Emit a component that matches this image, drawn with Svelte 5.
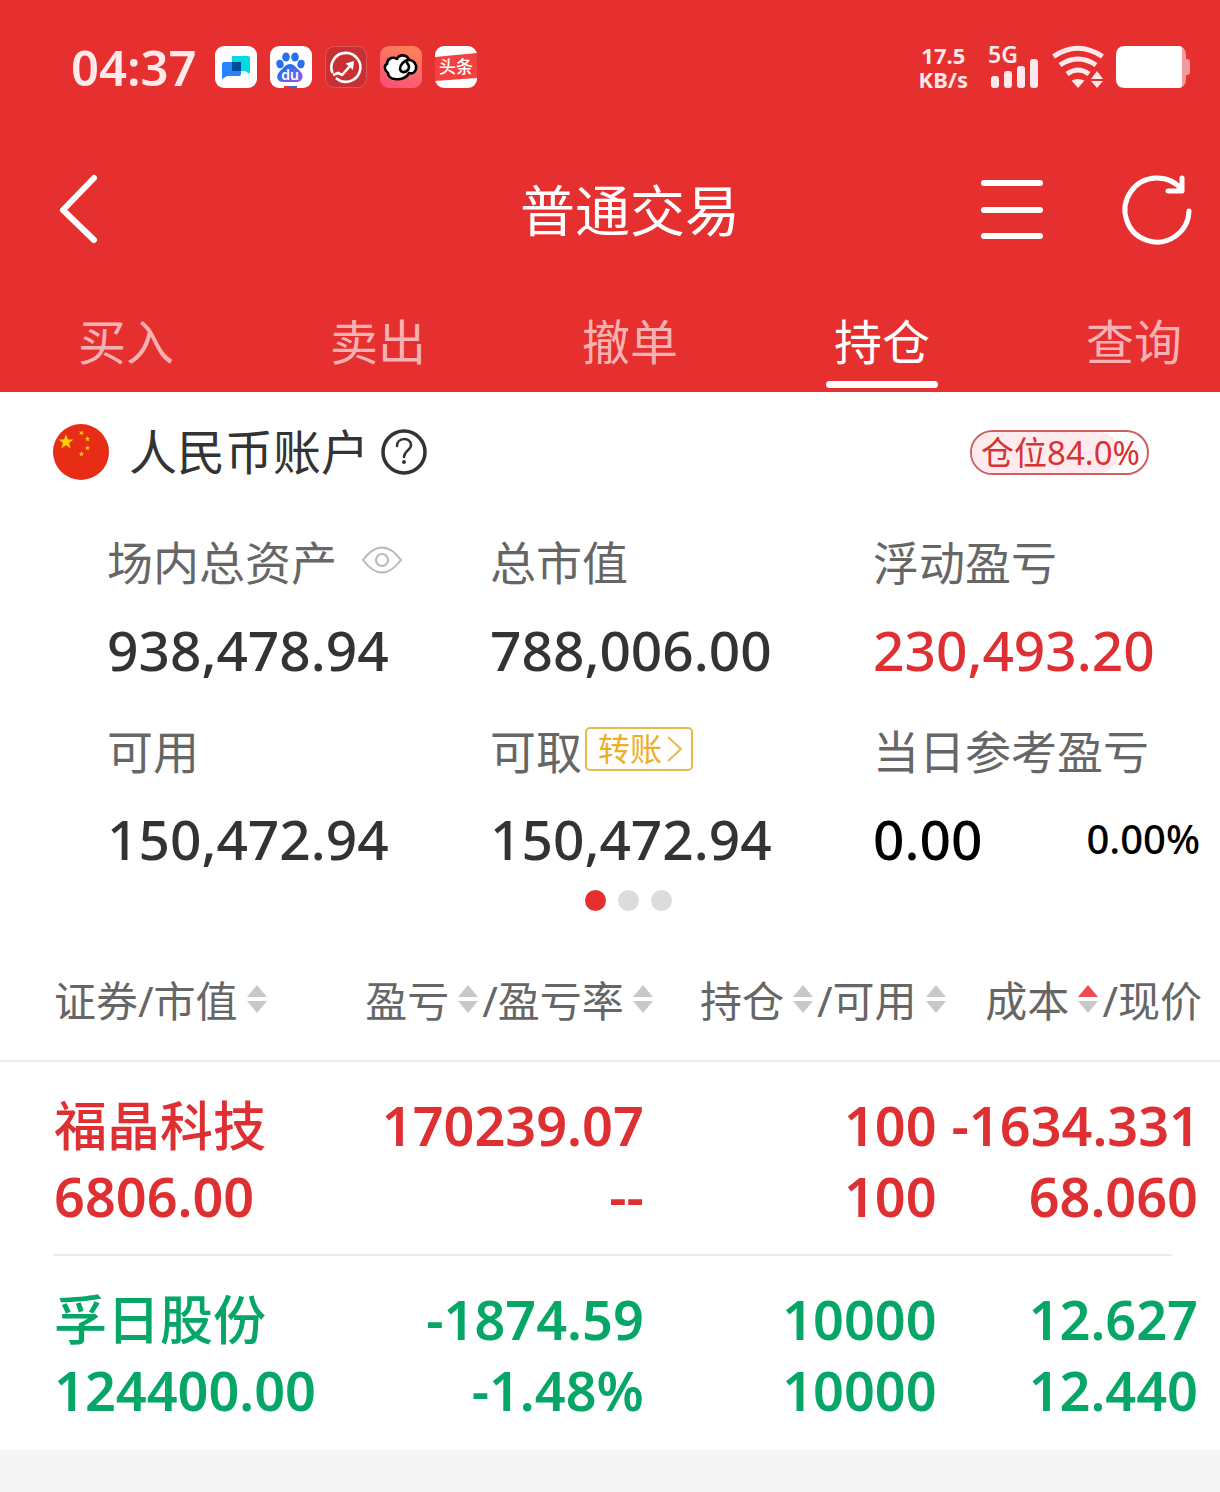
<script lang="ts">
	type Sort = 'up' | 'none' | null;

	const tabs = ['买入', '卖出', '撤单', '持仓', '查询'];
	let activeTab = $state('持仓');
	let activePage = $state(0);

	const columns: { label: string; sort: Sort }[][] = [
		[{ label: '证券/市值', sort: 'none' }],
		[{ label: '盈亏', sort: 'none' }, { label: '/盈亏率', sort: 'none' }],
		[{ label: '持仓', sort: 'none' }, { label: '/可用', sort: 'none' }],
		[{ label: '成本', sort: 'up' }, { label: '/现价', sort: null }]
	];

	const holdings = [
		{
			name: '福晶科技',
			trend: 'gain',
			value: '6806.00',
			cells: [['170239.07', '--'], ['100', '100'], ['-1634.331', '68.060']]
		},
		{
			name: '孚日股份',
			trend: 'loss',
			value: '124400.00',
			cells: [['-1874.59', '-1.48%'], ['10000', '10000'], ['12.627', '12.440']]
		}
	];

	const position = 84;
</script>

<svelte:head>
	<title>普通交易</title>
</svelte:head>

<div class="page">
	<header>
		<div class="status">
			<span class="clock">04:37</span>
			<div class="apps">
				<svg viewBox="0 0 42 42" aria-hidden="true">
					<rect width="42" height="42" rx="9" fill="#fff" />
					<path d="M17 10h16q2 0 2 2v16l-5-3H17z" fill="#00dbe0" />
					<path d="M9 16h17v12q0 2-2 2H12l-5 3V18q0-2 2-2z" fill="#2684fc" />
					<path d="M17 16h9v9h-9z" fill="#004b96" />
				</svg>
				<svg viewBox="0 0 42 42" aria-hidden="true">
					<defs>
						<linearGradient id="paw" x1="0" y1="0" x2="1" y2="1">
							<stop offset="0.3" stop-color="#2870ef" />
							<stop offset="1" stop-color="#a052f4" />
						</linearGradient>
					</defs>
					<rect width="42" height="42" rx="9" fill="#fff" />
					<g fill="#2870ef">
						<ellipse cx="16" cy="11" rx="3.800" ry="4.600" />
						<ellipse cx="25" cy="11" rx="3.800" ry="4.600" />
						<ellipse cx="10" cy="18" rx="3.600" ry="4.300" transform="rotate(-15 10 18)" />
						<ellipse cx="31" cy="18" rx="3.600" ry="4.300" transform="rotate(15 31 18)" />
					</g>
					<path d="M20 18c5 0 6 4 10 7 5 5 2 11-3 11H13c-6 0-8-6-3-11 4-3 5-7 10-7z" fill="url(#paw)" />
					<text x="20" y="34" text-anchor="middle" font-size="14" font-weight="600" fill="#fff">du</text>
					<path d="M14 40h6v2h-6z" fill="#e63737" />
					<path d="M20 40h7v2h-7z" fill="#2870ef" />
				</svg>
				<svg viewBox="0 0 42 42" aria-hidden="true">
					<rect x="0.500" y="0.500" width="41" height="41" rx="9" fill="#c93033" stroke="#df5555" />
					<g fill="none" stroke="#fff" stroke-width="2.600">
						<path d="M7.500 27A14.500 14.500 0 1 1 11 32" />
						<path d="M8 29l5-2 4 2 9-10" />
					</g>
					<path d="M20.500 17.500L29 15l-1 9z" fill="#fff" />
				</svg>
				<svg viewBox="0 0 42 42" aria-hidden="true">
					<defs>
						<linearGradient id="peach" x1="0.700" y1="0" x2="0.300" y2="1">
							<stop offset="0" stop-color="#ff8159" />
							<stop offset="1" stop-color="#fa5278" />
						</linearGradient>
					</defs>
					<rect width="42" height="42" rx="9" fill="url(#peach)" />
					<g stroke="#000" stroke-width="2.600" stroke-linecap="round" stroke-linejoin="round">
						<path
							d="M8 27c-4-3-4-8-1-9 0-5 5-8 10-5 2-5 10-5 12 1 5 0 8 5 7 9-1 4-4 5-7 4-2 5-9 7-14 6-4 0-7-3-7-6z"
							fill="#fff"
						/>
						<path d="M29 14c-5 0-9 5-9 9 1 4 5 4 8 1 2-3 1-5-1-7" fill="none" />
					</g>
				</svg>
				<svg viewBox="0 0 42 42" aria-hidden="true">
					<rect width="42" height="42" rx="9" fill="#fff" />
					<path d="M0 11l42-4v25L0 35z" fill="#f34040" />
					<text x="21" y="27" text-anchor="middle" font-size="17" font-weight="500" fill="#fff">头条</text>
				</svg>
			</div>
			<div class="system">
				<span class="speed">17.5<br />KB/s</span>
				<svg width="52" height="42" viewBox="0 0 52 42" aria-label="5G" role="img">
					<text x="0" y="17" font-size="23" font-weight="600" fill="#ffe9ea">5G</text>
					<g fill="#ffe9ea">
						<rect x="3" y="30" width="8" height="12" rx="3" />
						<rect x="16" y="25" width="8" height="17" rx="3" />
						<rect x="29" y="20" width="8" height="22" rx="3" />
						<rect x="42" y="13" width="8" height="29" rx="3" />
					</g>
				</svg>
				<svg width="52" height="42" viewBox="0 0 52 42" aria-label="Wi-Fi" role="img">
					<g fill="none" stroke="#ffe9ea" stroke-width="5">
						<path d="M1.500 10.500Q26-6 50.500 10.500" />
						<path d="M8 19q18-12 36 0" />
						<path d="M15 28q11-8 22 0" />
					</g>
					<path d="M19.500 34.500q6.500-3 13 0L26 42z" fill="#ffe9ea" />
					<path d="M45 25l-6 8h12zM45 42l-6-7h12z" fill="#ffe9ea" />
				</svg>
				<svg width="74" height="42" viewBox="0 0 74 42" aria-label="电量" role="img">
					<path d="M61 0q9 0 9 9v4h1q3 0 3 3v10q0 3-3 3h-1v4q0 9-9 9z" fill="#f59a9b" />
					<path d="M9 0h54q3 0 3 3v36q0 3-3 3H9q-9 0-9-9V9q0-9 9-9z" fill="#fff" />
				</svg>
			</div>
		</div>

		<div class="titlebar">
			<button class="icon" aria-label="返回">
				<svg width="40" height="72" viewBox="0 0 40 72"><path d="M34 4L3 36l31 30" /></svg>
			</button>
			<h1>普通交易</h1>
			<div class="actions">
				<button class="icon" aria-label="菜单">
					<svg width="62" height="72" viewBox="0 0 62 72"><path d="M3 9h56M3 36h56M3 62h56" /></svg>
				</button>
				<button class="icon" aria-label="刷新">
					<svg class="thin" width="70" height="72" viewBox="0 0 70 72">
						<path d="M67 37A32 32 0 1 1 60 16M60 4v13H46" />
					</svg>
				</button>
			</div>
		</div>

		<nav class="tabs">
			{#each tabs as tab}
				<button class:active={tab === activeTab} onclick={() => (activeTab = tab)}>{tab}</button>
			{/each}
		</nav>
	</header>

	<main>
		<section class="account">
			<div class="account-head">
				<svg class="flag" viewBox="0 0 56 56" aria-hidden="true">
					<defs>
						<path id="star" d="M0-8L1.900-2.500 7.600-2.500 3 1 4.700 6.500 0 3.200-4.700 6.500-3 1-7.600-2.500-1.900-2.500z" />
					</defs>
					<circle cx="28" cy="28" r="28" fill="#e72d16" />
					<g fill="#fdd205">
						<use href="#star" x="13" y="18" />
						<use href="#star" transform="translate(28.500 9) rotate(20) scale(.36)" />
						<use href="#star" transform="translate(34.500 15) scale(.36)" />
						<use href="#star" transform="translate(34.500 24) rotate(15) scale(.36)" />
						<use href="#star" transform="translate(28.500 30) scale(.36)" />
					</g>
				</svg>
				<h2>人民币账户</h2>
				<button class="help" aria-label="帮助">
					<svg width="46" height="46" viewBox="0 0 46 46">
						<circle cx="23" cy="23" r="21" stroke-width="3.500" />
						<path d="M16 17c0-9 14-9 14-1 0 5-7 6-7 12" stroke-width="2.500" />
						<circle cx="23" cy="33" r="1" stroke-width="2" />
					</svg>
				</button>
				<span class="position">
					<span class="fill" style="width: {position}%"></span>
					仓位{position.toFixed(1)}%
				</span>
			</div>

			<dl>
				<div>
					<dt>
						场内总资产
						<button class="eye" aria-label="隐藏金额">
							<svg width="42" height="28" viewBox="0 0 42 28">
								<path d="M2 14Q21-11 40 14 21 39 2 14z" />
								<circle cx="21" cy="14" r="6" />
							</svg>
						</button>
					</dt>
					<dd>938,478.94</dd>
				</div>
				<div>
					<dt>总市值</dt>
					<dd>788,006.00</dd>
				</div>
				<div>
					<dt>浮动盈亏</dt>
					<dd class="gain">230,493.20</dd>
				</div>
				<div>
					<dt>可用</dt>
					<dd>150,472.94</dd>
				</div>
				<div>
					<dt>
						可取
						<button class="transfer">
							转账
							<svg width="16" height="28" viewBox="0 0 16 28"><path d="M1 2l13 12L1 26" /></svg>
						</button>
					</dt>
					<dd>150,472.94</dd>
				</div>
				<div>
					<dt>当日参考盈亏</dt>
					<dd class="today">0.00 <small>0.00%</small></dd>
				</div>
			</dl>

			<div class="dots">
				{#each [0, 1, 2] as page}
					<button
						class:active={page === activePage}
						aria-label="第{page + 1}页"
						onclick={() => (activePage = page)}
					></button>
				{/each}
			</div>
		</section>

		<table>
			<colgroup>
				<col class="c1" />
				<col class="c2" />
				<col class="c3" />
				<col />
			</colgroup>
			<thead>
				<tr>
					{#each columns as parts}
						<th scope="col">
							<div class="parts">
								{#each parts as part}
									<span>{part.label}</span>
									{#if part.sort}
										<svg class="sort" width="20" height="28" viewBox="0 0 20 28" aria-hidden="true">
											<path class:on={part.sort === 'up'} d="M10 0l10 12H0z" />
											<path d="M10 28L0 16h20z" />
										</svg>
									{/if}
								{/each}
							</div>
						</th>
					{/each}
				</tr>
			</thead>
			<tbody>
				{#each holdings as row}
					<tr class={row.trend}>
						<td><span class="name">{row.name}</span><br />{row.value}</td>
						{#each row.cells as [top, bottom]}
							<td>{top}<br />{bottom}</td>
						{/each}
					</tr>
				{/each}
			</tbody>
		</table>
	</main>
</div>

<style>
	:global(body) {
		margin: 0;
		background: #f5f5f5;
	}

	.page {
		overflow: hidden;
		font-family: 'Noto Sans', 'Noto Sans CJK SC', sans-serif;
		color: #333;
	}

	button {
		padding: 0;
		border: 0;
		background: none;
		font: inherit;
		color: inherit;
		cursor: pointer;
	}

	svg {
		display: block;
		flex: none;
		overflow: visible;
	}

	header {
		background: #e62f2f;
		color: #fff;
	}

	/* Status bar */
	.status {
		display: flex;
		align-items: center;
		height: 42px;
		padding: 46px 30px 40px 71px;
		color: #ffe9ea;
	}

	.clock {
		font-size: 49px;
		font-weight: 600;
		line-height: 42px;
	}

	.apps {
		display: flex;
		gap: 13px;
		margin-left: 18px;
	}

	.apps svg {
		width: 42px;
		height: 42px;
	}

	.system {
		display: flex;
		align-items: center;
		gap: 12px;
		margin-left: auto;
	}

	.speed {
		margin-right: 8px;
		font-size: 22px;
		font-weight: 700;
		line-height: 24px;
		text-align: center;
	}

	/* Title bar, its right side runs past the window like the tabs */
	.titlebar {
		display: grid;
		grid-template-columns: 1fr auto 1fr;
		align-items: center;
		height: 164px;
		margin-right: -40px;
		padding: 0 60px;
	}

	h1 {
		margin: 0;
		font-size: 55px;
		font-weight: 400;
		line-height: 80px;
	}

	.actions {
		display: flex;
		justify-content: flex-end;
		gap: 79px;
		padding-right: 8px;
	}

	.icon {
		justify-self: start;
	}

	.icon svg {
		fill: none;
		stroke: #fff;
		stroke-width: 6;
		stroke-linecap: round;
		stroke-linejoin: round;
	}

	.icon .thin {
		stroke-width: 5;
	}

	.tabs {
		display: grid;
		grid-template-columns: repeat(5, 1fr);
		margin-right: -40px;
	}

	.tabs button {
		position: relative;
		height: 100px;
		font-size: 48px;
		line-height: 100px;
		color: #f6b2b2;
	}

	.tabs .active {
		color: #fff;
	}

	.tabs .active::after {
		content: '';
		position: absolute;
		bottom: 4px;
		left: 50%;
		width: 112px;
		height: 7px;
		margin-left: -56px;
		border-radius: 4px;
		background: #fff;
	}

	main {
		background: #fff;
	}

	/* Account summary */
	.account {
		padding-top: 30px;
	}

	.account-head {
		display: flex;
		align-items: center;
		height: 60px;
		padding: 0 71px 0 53px;
	}

	.flag {
		width: 56px;
		height: 56px;
	}

	h2 {
		margin: 0 12px 0 20px;
		font-size: 48px;
		font-weight: 400;
		line-height: 60px;
	}

	.help svg {
		fill: none;
		stroke: #333;
		stroke-linecap: round;
	}

	.position {
		position: relative;
		z-index: 0;
		box-sizing: border-box;
		height: 45px;
		margin-left: auto;
		padding: 0 7px 0 9px;
		border: 2px solid #d0605f;
		border-radius: 23px;
		font-size: 33px;
		line-height: 41px;
		color: #d73334;
	}

	.fill {
		position: absolute;
		inset: 0 auto 0 0;
		z-index: -1;
		border-radius: 21px;
		background: #ffebed;
	}

	dl {
		display: grid;
		grid-template-columns: repeat(3, 1fr);
		row-gap: 30px;
		margin: 50px -36px 0 107px;
	}

	dt {
		display: flex;
		align-items: center;
		font-size: 46px;
		line-height: 60px;
		color: #666;
	}

	dd {
		margin: 19px 0 0;
		font-size: 55px;
		font-weight: 500;
		line-height: 78px;
		padding-bottom: 2px;
	}

	.eye,
	.transfer {
		margin-bottom: 4px;
	}

	.eye {
		margin-left: 24px;
	}

	.eye svg {
		fill: none;
		stroke: #b8b8b8;
		stroke-width: 2;
	}

	.transfer {
		display: flex;
		align-items: center;
		gap: 5px;
		box-sizing: border-box;
		height: 44px;
		margin-left: 3px;
		padding: 0 8px 0 11px;
		border: 2px solid #e9b949;
		border-radius: 5px;
		font-size: 32px;
		line-height: 40px;
		color: #edae25;
	}

	.transfer svg {
		fill: none;
		stroke: #e9b949;
		stroke-width: 2;
	}

	.today {
		display: flex;
		align-items: center;
		justify-content: space-between;
		padding-right: 56px;
		color: #000;
	}

	small {
		font-size: 40px;
	}

	.dots {
		display: flex;
		justify-content: center;
		gap: 12px;
		margin: 10px -36px 30px 0;
	}

	.dots button {
		width: 21px;
		height: 21px;
		border-radius: 50%;
		background: #dcdcdc;
	}

	.dots .active {
		background: #e62f2f;
	}

	/* Holdings */
	table {
		width: 100%;
		table-layout: fixed;
		border-collapse: collapse;
	}

	.c1 {
		width: 28%;
	}

	.c2 {
		width: 26%;
	}

	.c3 {
		width: 24%;
	}

	th {
		height: 119px;
		padding: 0;
		border-bottom: 2px solid #ebebeb;
		font-size: 42px;
		font-weight: 400;
		line-height: 60px;
		color: #666;
		white-space: nowrap;
	}

	.parts {
		display: flex;
		align-items: center;
		justify-content: flex-end;
		padding-right: 6px;
	}

	th:first-child .parts {
		justify-content: flex-start;
		padding: 0 0 0 54px;
	}

	th:last-child .parts {
		padding-right: 18px;
	}

	.sort {
		margin: 0 4px 4px 9px;
		fill: #c8c8c8;
	}

	.sort:last-child {
		margin-right: 0;
	}

	.sort .on {
		fill: #f04b55;
	}

	tbody tr:not(:last-child) {
		background: linear-gradient(#ebebeb, #ebebeb) 53px 100% / calc(100% - 101px) 2px no-repeat;
	}

	td {
		padding: 28px 15px 24px 0;
		font-size: 54px;
		font-weight: 600;
		line-height: 71px;
		text-align: right;
		white-space: nowrap;
	}

	td:first-child {
		padding-left: 54px;
		text-align: left;
	}

	td:last-child {
		padding-right: 22px;
	}

	.name {
		font-size: 53px;
		font-weight: 500;
	}

	.gain {
		color: #de3032;
	}

	.loss {
		color: #05a666;
	}
</style>
